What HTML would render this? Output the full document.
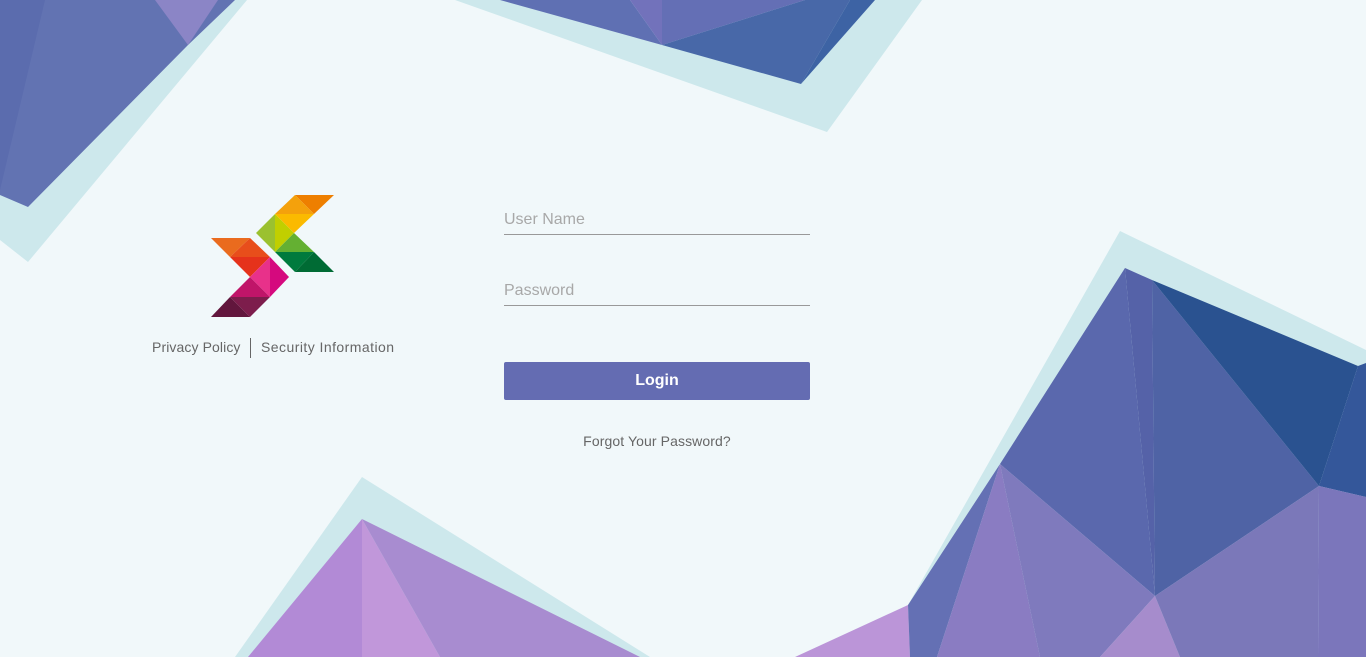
<!DOCTYPE html>
<html><head><meta charset="utf-8"><style>
html,body{margin:0;padding:0;width:1366px;height:657px;overflow:hidden;background:#f1f8fa;font-family:"Liberation Sans",sans-serif;}
svg.bg{position:absolute;left:0;top:0}
.f{position:absolute;left:504px;width:306px;border-bottom:1px solid #999;color:#a8a8a8;font-size:16px;height:24px;line-height:20px;}
.btn{position:absolute;left:504px;top:362px;width:306px;height:38px;background:#646cb2;border-radius:2px;color:#fff;font-weight:bold;font-size:16px;text-align:center;line-height:38px;}
.t{position:absolute;color:#666;font-size:14px;}
</style></head><body>
<svg class="bg" width="1366" height="657" viewBox="0 0 1366 657">
<polygon points="0,0 247,0 28,262 0,240" fill="#cde8ec"/>
<polygon points="0,0 235,0 188,45 28,207 0,195" fill="#6273b2"/>
<polygon points="0,0 45,0 0,190" fill="#5b6cae"/>
<polygon points="155,0 218,0 188,45" fill="#8b85c6"/>
<polygon points="455,0 922,0 827,132" fill="#cde8ec"/>
<polygon points="500,0 630,0 662,45" fill="#5f70b3"/>
<polygon points="630,0 662,0 662,45" fill="#7272bb"/>
<polygon points="662,0 805,0 662,45" fill="#646fb5"/>
<polygon points="662,45 805,0 850,0 801,84" fill="#4868a8"/>
<polygon points="850,0 875,0 801,84" fill="#3d63a4"/>
<polygon points="235,657 362,477 650,657" fill="#cde8ec"/>
<polygon points="248,657 362,519 362,657" fill="#b28ad6"/>
<polygon points="362,519 362,657 440,657" fill="#c197da"/>
<polygon points="362,519 440,657 640,657" fill="#a88cd0"/>
<polygon points="1120,231 1366,350 1366,657 908,657 908,605" fill="#cde8ec"/>
<polygon points="795,657 908,605 910,657" fill="#bb95d8"/>
<polygon points="1125,268 1000,464 1155,596" fill="#5a68ad"/>
<polygon points="1125,268 1152,280 1155,596" fill="#5562a8"/>
<polygon points="1152,280 1319,486 1155,596" fill="#4f63a5"/>
<polygon points="1152,280 1358,366 1319,486" fill="#2a5290"/>
<polygon points="1358,366 1366,363 1366,497 1319,486" fill="#34579a"/>
<polygon points="1000,464 908,605 910,657 937,657" fill="#6470b4"/>
<polygon points="1000,464 937,657 1040,657" fill="#8a7cc2"/>
<polygon points="1000,464 1040,657 1100,657 1155,596" fill="#7f7abd"/>
<polygon points="1155,596 1100,657 1180,657" fill="#a68ccc"/>
<polygon points="1155,596 1319,486 1318,657 1180,657" fill="#7b78b9"/>
<polygon points="1319,486 1366,497 1366,657 1318,657" fill="#7b76bb"/>
<polygon points="295,195 334,195 314,214" fill="#ee7f00"/>
<polygon points="295,195 314,214 275,214" fill="#f4a10c"/>
<polygon points="275,214 314,214 294,233" fill="#fbba00"/>
<polygon points="275,214 294,233 275,252" fill="#c1cf00"/>
<polygon points="275,214 256,233 275,252" fill="#9bc12f"/>
<polygon points="294,233 314,252 275,252" fill="#64b032"/>
<polygon points="275,252 314,252 295,272" fill="#007a3d"/>
<polygon points="314,252 334,272 295,272" fill="#006b34"/>
<polygon points="211,238 250,238 230,257" fill="#ea6b1e"/>
<polygon points="250,238 270,257 230,257" fill="#e84e1b"/>
<polygon points="230,257 270,257 250,277" fill="#e5321b"/>
<polygon points="270,257 250,277 270,297" fill="#e8318a"/>
<polygon points="270,257 289,277 270,297" fill="#d5097e"/>
<polygon points="250,277 270,297 230,297" fill="#c01569"/>
<polygon points="230,297 270,297 250,317" fill="#7d1d4c"/>
<polygon points="230,297 250,317 211,317" fill="#62163d"/>
<line x1="250.5" y1="338" x2="250.5" y2="358" stroke="#666" stroke-width="1"/>
</svg>
<div class="t" style="left:152px;top:339px;letter-spacing:0.1px;">Privacy Policy</div>
<div class="t" style="left:261px;top:339px;letter-spacing:0.45px;">Security Information</div>
<div class="f" style="top:210px;">User Name</div>
<div class="f" style="top:281px;">Password</div>
<div class="btn">Login</div>
<div class="t" style="left:504px;width:306px;text-align:center;top:433px;letter-spacing:0.1px;">Forgot Your Password?</div>
</body></html>
